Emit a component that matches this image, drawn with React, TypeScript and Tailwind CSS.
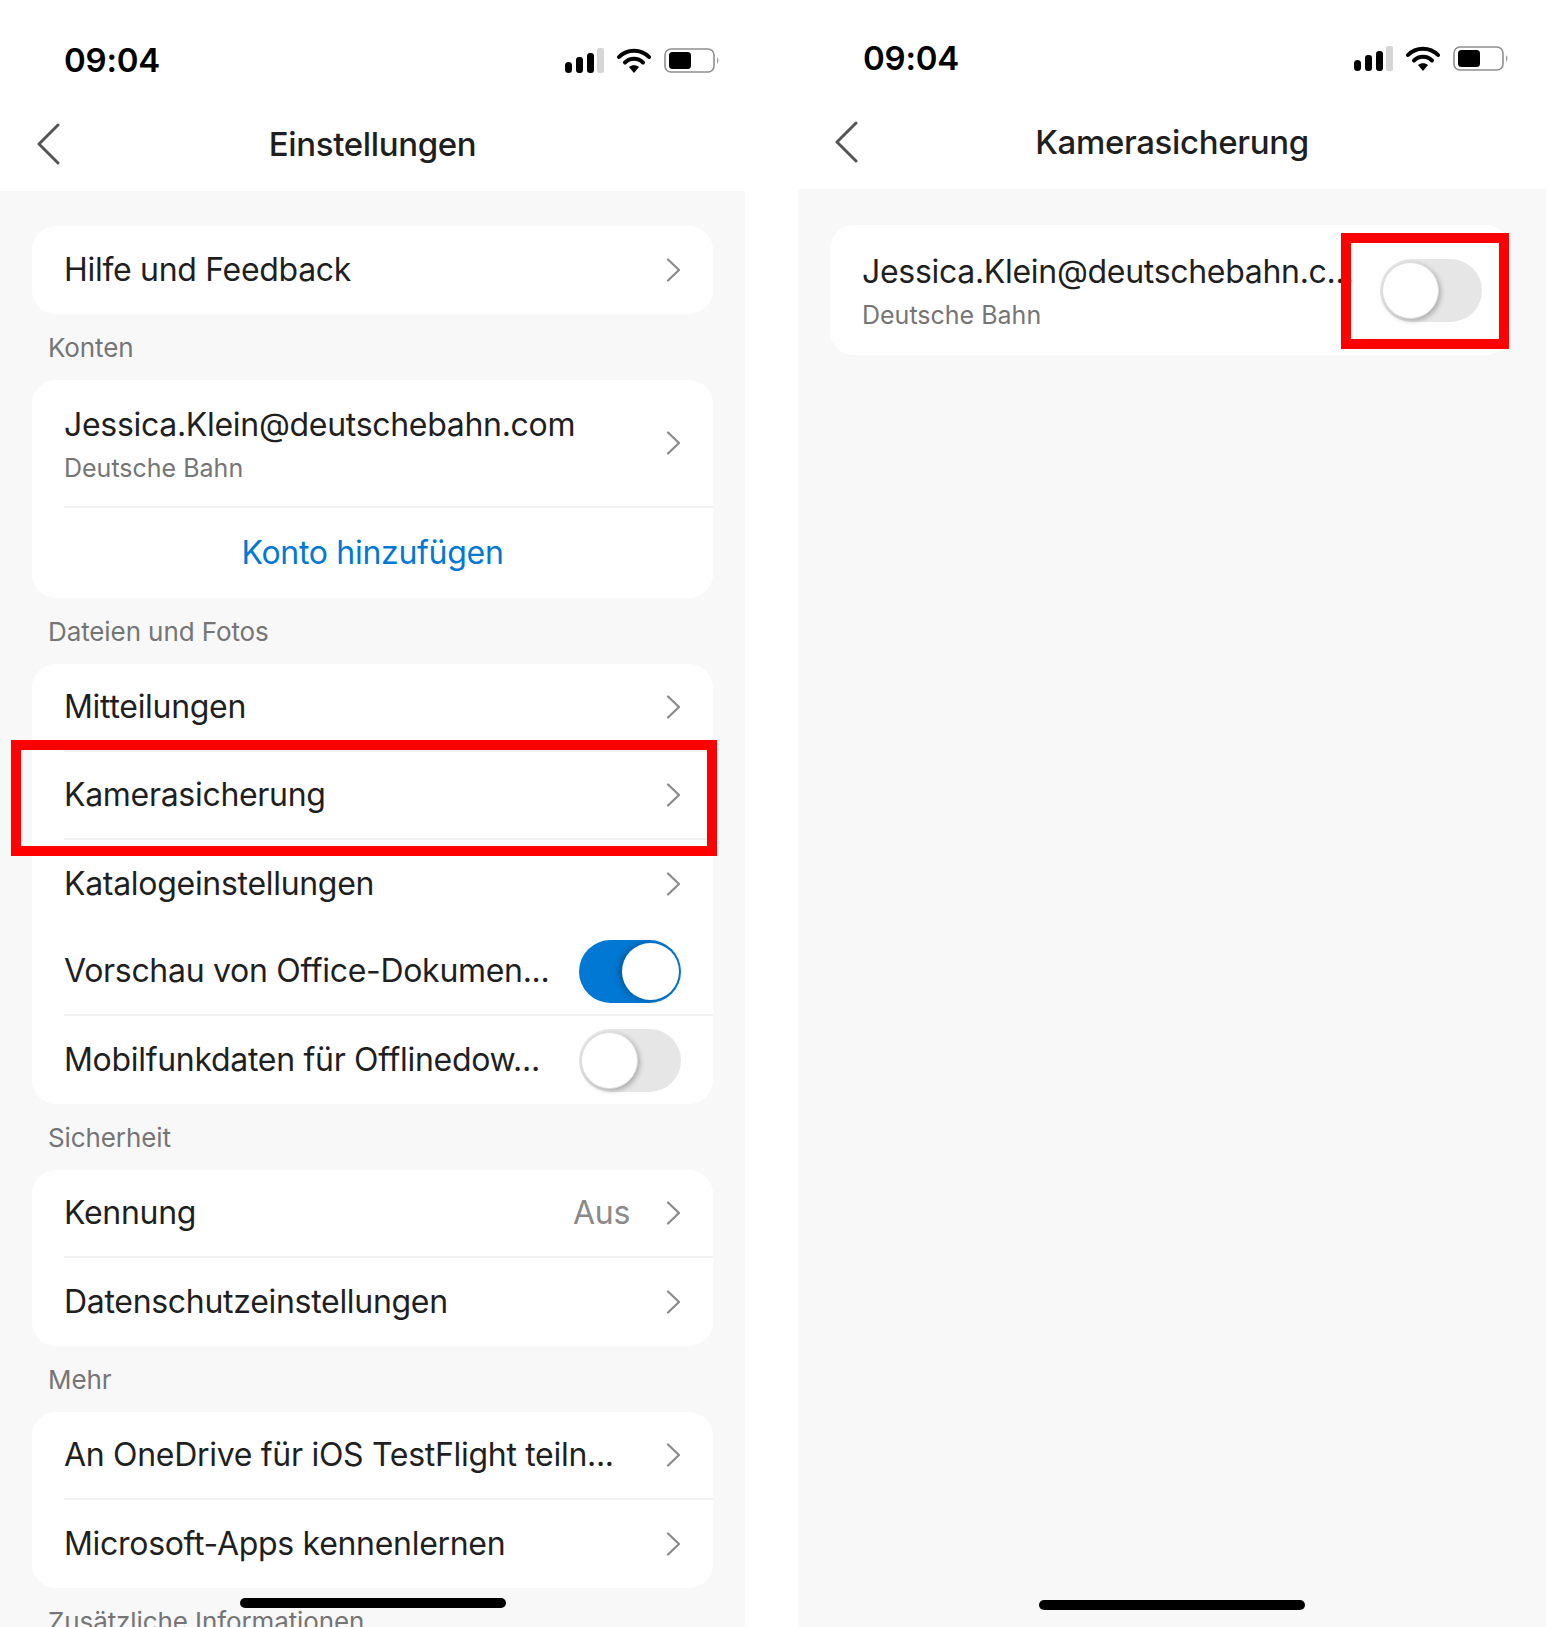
import React from "react";

const font = { fontFamily: '"Inter", "Liberation Sans", sans-serif' };

function Chevron() {
  return (
    <svg width="15" height="24" viewBox="0 0 15 24" fill="none" className="shrink-0">
      <path d="M2 1.5 L13 12 L2 22.5" stroke="#8a8a8a" strokeWidth="2.2" strokeLinecap="round" strokeLinejoin="round" />
    </svg>
  );
}

function Back() {
  return (
    <svg width="24" height="42" viewBox="0 0 24 42" fill="none">
      <path d="M22 2 L3 21 L22 40" stroke="#555555" strokeWidth="3" strokeLinecap="round" strokeLinejoin="round" />
    </svg>
  );
}

function StatusBar({ left, top }: { left: string; top: string }) {
  return (
    <div className={`flex items-center justify-between ${left} ${top}`}>
      <span className="text-[33px] leading-[25px] font-semibold text-black tracking-[-0.2px]">09:04</span>
      <div className="flex items-center">
        <svg width="39" height="25" viewBox="0 0 39 25">
          <rect x="0" y="14" width="7" height="11" rx="3.5" fill="#000" />
          <rect x="11" y="9" width="7" height="16" rx="3" fill="#000" />
          <rect x="22" y="5" width="7" height="20" rx="3" fill="#000" />
          <rect x="32" y="0" width="7" height="25" rx="2" fill="#d6d6d6" />
        </svg>
        <svg width="34" height="25" viewBox="0 0 34 25" className="ml-[13px]" fill="none">
          <path d="M2 9 C10 0.5 24 0.5 32 9" stroke="#000" strokeWidth="4" strokeLinecap="round" />
          <path d="M8 14.5 C13 9.5 21 9.5 26 14.5" stroke="#000" strokeWidth="4" strokeLinecap="round" />
          <path d="M12 19 L17 25 L22 19 C19 16.5 15 16.5 12 19 Z" fill="#000" />
        </svg>
        <svg width="55" height="25" viewBox="0 0 55 25" className="ml-[13px]" fill="none">
          <rect x="1" y="1" width="49" height="23" rx="6" stroke="#8e8e8e" strokeWidth="1.6" fill="#fff" />
          <rect x="5" y="4" width="22" height="17" rx="3.5" fill="#000" />
          <path d="M53 9 C55 11 55 14 53 16 Z" fill="#9a9a9a" />
        </svg>
      </div>
    </div>
  );
}

function Header({ title, timeOffset }: { title: string; timeOffset: string }) {
  return (
    <div className="bg-white shrink-0">
      <StatusBar left={timeOffset} top="" />
      <div className="relative flex items-center justify-center h-[42px] mt-[50px] mb-[26px]">
        <span className="absolute left-[36px] flex"><Back /></span>
        <span className="text-[33px] leading-[42px] font-medium text-[#1f1f1f] tracking-[-0.35px]">{title}</span>
      </div>
    </div>
  );
}

function Card({ children }: { children: React.ReactNode }) {
  return <div className="bg-white rounded-[24px] overflow-hidden">{children}</div>;
}

function Label({ children }: { children: React.ReactNode }) {
  return (
    <div className="h-[66px] flex items-center pl-[16px] text-[26px] text-[#757575] tracking-[-0.1px] whitespace-nowrap">
      {children}
    </div>
  );
}

function Row({ label, value, line, right }: { label: string; value?: string; line?: boolean; right?: React.ReactNode }) {
  return (
    <div className={`ml-[32px] h-[88px] flex items-center pr-[32px] ${line ? "border-b-2 border-[#f1f1f1]" : ""}`}>
      <span className="flex-1 text-[32px] text-[#1f1f1f] tracking-[-0.3px] whitespace-nowrap">{label}</span>
      {value && <span className="text-[32px] text-[#8a8a8a] mr-[36px] tracking-[-0.3px]">{value}</span>}
      {right ?? <Chevron />}
    </div>
  );
}

function Toggle({ on }: { on?: boolean }) {
  return (
    <div className={`shrink-0 w-[102px] h-[63px] rounded-full flex items-center px-[2px] ${on ? "justify-end bg-[#0078d4]" : "bg-[#e6e6e6]"}`}>
      <div className={`w-[57px] h-[57px] rounded-full bg-white ${on ? "shadow-[-3px_0_6px_rgba(0,0,0,0.25)]" : "shadow-[2px_2px_5px_rgba(0,0,0,0.25)] border border-[#dddddd]"}`} />
    </div>
  );
}

function Red({ className }: { className: string }) {
  return <div className={`absolute border-[10px] border-[#ff0000] ${className}`} />;
}

export default function App() {
  return (
    <div className="relative w-[1546px] h-[1627px] bg-white overflow-hidden flex gap-[53px]" style={font}>
      <div className="relative w-[745px] flex flex-col pt-[48px]">
        <Header title="Einstellungen" timeOffset="pl-[64px] pr-[26px]" />
        <div className="flex-1 bg-[#f8f8f8] px-[32px] pt-[35px] overflow-hidden">
          <Card>
            <Row label="Hilfe und Feedback" />
          </Card>
          <Label>Konten</Label>
          <Card>
            <div className="ml-[32px] h-[128px] flex items-center pr-[32px] border-b-2 border-[#f1f1f1]">
              <div className="flex-1">
                <div className="text-[32px] leading-[46px] text-[#1f1f1f] tracking-[-0.3px]">Jessica.Klein@deutschebahn.com</div>
                <div className="text-[25px] leading-[34px] mt-[3px] text-[#757575]">Deutsche Bahn</div>
              </div>
              <Chevron />
            </div>
            <div className="h-[90px] flex items-center justify-center text-[32px] text-[#0078d4] tracking-[-0.3px]">Konto hinzufügen</div>
          </Card>
          <Label>Dateien und Fotos</Label>
          <Card>
            <Row label="Mitteilungen" line />
            <Row label="Kamerasicherung" line />
            <Row label="Katalogeinstellungen" />
            <Row label="Vorschau von Office-Dokumen..." line right={<Toggle on />} />
            <Row label="Mobilfunkdaten für Offlinedow..." right={<Toggle />} />
          </Card>
          <Label>Sicherheit</Label>
          <Card>
            <Row label="Kennung" value="Aus" line />
            <Row label="Datenschutzeinstellungen" />
          </Card>
          <Label>Mehr</Label>
          <Card>
            <Row label="An OneDrive für iOS TestFlight teiln..." line />
            <Row label="Microsoft-Apps kennenlernen" />
          </Card>
          <Label>Zusätzliche Informationen</Label>
        </div>
        <div className="absolute left-[240px] top-[1598px] w-[266px] h-[10px] rounded-full bg-black" />
        <Red className="left-[11px] top-[740px] w-[706px] h-[116px]" />
      </div>

      <div className="relative w-[748px] flex flex-col pt-[46px]">
        <Header title="Kamerasicherung" timeOffset="pl-[65px] pr-[38px]" />
        <div className="flex-1 bg-[#f8f8f8] pl-[32px] pr-[36px] pt-[36px]">
          <div className="bg-white rounded-[24px] h-[130px] flex items-center pl-[32px] pr-[28px]">
            <div className="flex-1 min-w-0">
              <div className="text-[32px] leading-[46px] text-[#1f1f1f] tracking-[-0.3px] whitespace-nowrap">Jessica.Klein@deutschebahn.c...</div>
              <div className="text-[25px] leading-[34px] mt-[3px] text-[#757575]">Deutsche Bahn</div>
            </div>
            <Toggle />
          </div>
        </div>
        <div className="absolute left-[241px] top-[1600px] w-[266px] h-[10px] rounded-full bg-black" />
        <Red className="left-[543px] top-[233px] w-[168px] h-[116px]" />
      </div>
    </div>
  );
}
